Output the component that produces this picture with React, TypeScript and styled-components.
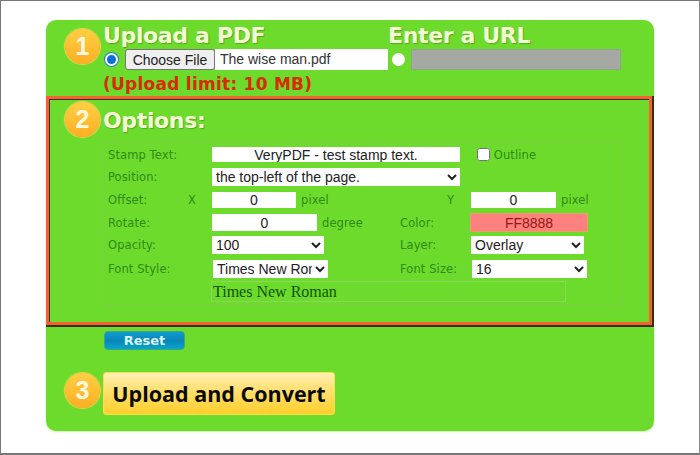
import React from "react";
import styled, { createGlobalStyle } from "styled-components";

const Global = createGlobalStyle`
  html, body { margin: 0; padding: 0; background: #fff; }
  body { font-family: "Liberation Sans", Arial, sans-serif; }
`;

const Frame = styled.div`
  box-sizing: border-box;
  width: 700px;
  height: 455px;
  border: 1px solid #777;
  border-right-color: #888;
  border-bottom: 2px solid #777;
  padding: 19px 0 0 45px;
`;

const Panel = styled.main`
  box-sizing: border-box;
  width: 608px;
  height: 411px;
  background: #6ddb2c;
  border-radius: 10px;
  box-shadow: 0 1px 2px #c9f0a8;
  display: flex;
  flex-direction: column;
`;

const Badge = styled.div`
  box-sizing: border-box;
  flex: none;
  width: 35px;
  height: 35px;
  border-radius: 50%;
  background: linear-gradient(#ffcf45, #ffae22);
  box-shadow: 0 0 1px 1px #f5d050;
  color: #fff8e0;
  font: bold 25px/35px "Liberation Sans", sans-serif;
  text-align: center;
`;

const UploadSection = styled.section`
  box-sizing: border-box;
  height: 76px;
  display: flex;
  padding: 9px 0 0 19px;
  gap: 3px;
`;

const UploadBody = styled.div`
  width: 520px;
  margin-top: -6px;
`;

const Headings = styled.div`
  display: grid;
  grid-template-columns: 285px 1fr;
  height: 25px;
`;

const Heading = styled.h2`
  margin: 0;
  font: bold 22px/25px "DejaVu Sans", sans-serif;
  letter-spacing: -0.35px;
  color: #f3fbd2;
  text-shadow: 1px 1px 1px #5aa528;
  white-space: nowrap;
`;

const SourceRow = styled.div`
  display: flex;
  align-items: center;
  height: 21px;
  margin-top: 1px;
`;

const Radio = styled.input`
  appearance: none;
  box-sizing: border-box;
  flex: none;
  width: 13px;
  height: 13px;
  margin: 0 0 0 ${(p) => p.$left}px;
  border-radius: 50%;
  background: #fff;
  &:checked {
    background: #0b6fd8;
    border: 2px solid #fff;
    box-shadow: 0 0 0 1px #1a80e0;
  }
`;

const FileButton = styled.button`
  box-sizing: border-box;
  flex: none;
  width: 90px;
  height: 21px;
  margin-left: 7px;
  padding: 0;
  background: #efefef;
  border: 1px solid #767676;
  border-radius: 3px;
  color: #222;
  font: 14px "Liberation Sans", sans-serif;
`;

const FileName = styled.span`
  box-sizing: border-box;
  flex: none;
  width: 173px;
  height: 21px;
  padding-left: 5px;
  background: #fff;
  color: #333;
  font: 14px/21px "Liberation Sans", sans-serif;
`;

const UrlInput = styled.input`
  box-sizing: border-box;
  flex: none;
  width: 210px;
  height: 21px;
  margin-left: 6px;
  background: #a5a8a3;
  border: 1px solid #8fa78a;
`;

const Limit = styled.p`
  margin: 4px 0 0;
  font: bold 17px/20px "DejaVu Sans", sans-serif;
  letter-spacing: 0.25px;
  color: #d92a00;
  white-space: nowrap;
`;

const OptionsSection = styled.section`
  box-sizing: border-box;
  width: 606px;
  height: 229px;
  border: 3px solid #f4612c;
  outline: 0;
  box-shadow: 1px 1px 0 1px #33301f, inset 1px 1px 0 #33301f;
  padding: 3px 0 0 16px;
  display: flex;
  gap: 3px;
`;

const OptionsBody = styled.div`
  width: 519px;
`;

const OptionsHeading = styled(Heading)`
  height: 38px;
  padding-top: 6px;
  box-sizing: border-box;
  line-height: 25px;
  margin-bottom: 0;
`;

const OptionsTable = styled.div`
  box-sizing: border-box;
  width: 519px;
  height: 165px;
  border: 1px solid #7fce45;
  padding: 2px 0 0 4px;
  display: grid;
  grid-template-columns: 80px 24px 188px 71px 1fr;
  grid-template-rows: 23px 22px 24px 21px 24px 24px 21px;
  align-items: center;
  font: 11.5px "DejaVu Sans", sans-serif;
  color: #2f8a18;
`;

const Label = styled.span`
  letter-spacing: 0.1px;
  white-space: nowrap;
`;

const Cell = styled.div`
  display: flex;
  align-items: center;
  gap: ${(p) => p.$gap ?? 5}px;
  grid-column: ${(p) => p.$col ?? "auto"};
`;

const TextField = styled.input`
  box-sizing: border-box;
  width: ${(p) => p.$w}px;
  height: ${(p) => p.$h}px;
  border: 0;
  padding: 0;
  background: ${(p) => p.$bg ?? "#fff"};
  color: ${(p) => p.$fg ?? "#222"};
  text-align: center;
  font: 14px "Liberation Sans", sans-serif;
  box-shadow: ${(p) => (p.$bg ? "0 0 0 1px #e8a060" : "none")};
`;

const Select = styled.select`
  box-sizing: border-box;
  width: ${(p) => p.$w}px;
  height: 18px;
  margin-left: ${(p) => p.$left ?? 0}px;
  border: 0;
  border-radius: 0;
  padding: 0;
  background-color: #fff;
  color: #222;
  font: 14px "Liberation Sans", sans-serif;
`;

const Check = styled.input`
  width: 13px;
  height: 13px;
  margin: 0 0 0 17px;
`;

const Preview = styled.div`
  box-sizing: border-box;
  grid-column: 3 / 6;
  width: 355px;
  height: 21px;
  margin-left: -1px;
  padding-left: 1px;
  border: 1px solid #8fd45c;
  color: #14500a;
  font: 16px/19px "Liberation Serif", serif;
`;

const Actions = styled.div`
  flex: 1;
  display: flex;
  flex-direction: column;
  padding: 6px 0 0 19px;
`;

const ResetButton = styled.button`
  box-sizing: border-box;
  width: 81px;
  height: 19px;
  margin-left: 39px;
  padding: 0;
  border: 1px solid #3aa58a;
  border-radius: 4px;
  background: linear-gradient(#0f9ccf, #0a85ba 50%, #07a5c8);
  color: #d8f6f2;
  font: bold 13px "DejaVu Sans", sans-serif;
`;

const SubmitRow = styled.div`
  display: flex;
  align-items: flex-start;
  gap: 3px;
  margin-top: 22px;
`;

const SubmitBadge = styled(Badge)`
  margin-top: 1px;
`;

const SubmitButton = styled.button`
  box-sizing: border-box;
  width: 232px;
  height: 43px;
  padding: 0;
  border: 1px solid #f3e24a;
  border-radius: 3px;
  background: linear-gradient(#fff0b8, #ffe27a 35%, #ffcf2c);
  color: #0b0b05;
  font: bold 21.5px "Open Sans", "DejaVu Sans", sans-serif;
`;

export default function App() {
  return (
    <Frame>
      <Global />
      <Panel>
        <UploadSection>
          <Badge>1</Badge>
          <UploadBody>
            <Headings>
              <Heading>Upload a PDF</Heading>
              <Heading>Enter a URL</Heading>
            </Headings>
            <SourceRow>
              <Radio type="radio" name="source" defaultChecked $left={2} />
              <FileButton type="button">Choose File</FileButton>
              <FileName>The wise man.pdf</FileName>
              <Radio type="radio" name="source" $left={4} />
              <UrlInput disabled />
            </SourceRow>
            <Limit>(Upload limit: 10 MB)</Limit>
          </UploadBody>
        </UploadSection>
        <OptionsSection>
          <Badge>2</Badge>
          <OptionsBody>
            <OptionsHeading>Options:</OptionsHeading>
            <OptionsTable>
              <Label>Stamp Text:</Label>
              <Cell $col="3 / 6" $gap={0}>
                <TextField $w={248} $h={15} defaultValue="VeryPDF - test stamp text." />
                <Check type="checkbox" />
                <Label>&nbsp;Outline</Label>
              </Cell>

              <Label>Position:</Label>
              <Cell $col="3 / 6">
                <Select $w={248}>
                  <option>the top-left of the page.</option>
                </Select>
              </Cell>

              <Label>Offset:</Label>
              <Label>X</Label>
              <Cell>
                <TextField $w={84} $h={16} defaultValue="0" />
                <Label>pixel</Label>
              </Cell>
              <Label style={{ textAlign: "right", paddingRight: 17 }}>Y</Label>
              <Cell>
                <TextField $w={85} $h={16} defaultValue="0" />
                <Label>pixel</Label>
              </Cell>

              <Label>Rotate:</Label>
              <Cell $col="3">
                <TextField $w={105} $h={17} defaultValue="0" />
                <Label>degree</Label>
              </Cell>
              <Label>Color:</Label>
              <Cell>
                <TextField $w={116} $h={17} $bg="#ff8080" $fg="#8f1a10" defaultValue="FF8888" />
              </Cell>

              <Label>Opacity:</Label>
              <Cell $col="3">
                <Select $w={112}>
                  <option>100</option>
                </Select>
              </Cell>
              <Label>Layer:</Label>
              <Cell>
                <Select $w={113}>
                  <option>Overlay</option>
                </Select>
              </Cell>

              <Label>Font Style:</Label>
              <Cell $col="3">
                <Select $w={115} $left={1}>
                  <option>Times New Roman</option>
                </Select>
              </Cell>
              <Label>Font Size:</Label>
              <Cell>
                <Select $w={115} $left={1}>
                  <option>16</option>
                </Select>
              </Cell>

              <Preview>Times New Roman</Preview>
            </OptionsTable>
          </OptionsBody>
        </OptionsSection>
        <Actions>
          <ResetButton type="button">Reset</ResetButton>
          <SubmitRow>
            <SubmitBadge>3</SubmitBadge>
            <SubmitButton type="button">Upload and Convert</SubmitButton>
          </SubmitRow>
        </Actions>
      </Panel>
    </Frame>
  );
}
